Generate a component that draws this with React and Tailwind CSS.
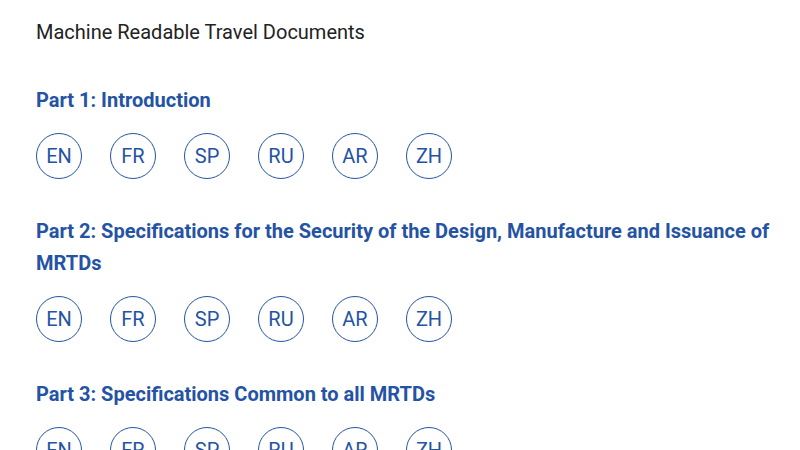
const LANGS = ['EN', 'FR', 'SP', 'RU', 'AR', 'ZH']

const PARTS = [
  'Part 1: Introduction',
  'Part 2: Specifications for the Security of the Design, Manufacture and Issuance of MRTDs',
  'Part 3: Specifications Common to all MRTDs',
]

function LangRow() {
  return (
    <div className="flex gap-[28px]">
      {LANGS.map((l) => (
        <a
          key={l}
          href="#"
          className="flex h-[46px] w-[46px] items-center justify-center rounded-full border-[1.5px] border-[#2553a3] text-[20px] text-[#2553a3] font-['Roboto',sans-serif]"
        >
          {l}
        </a>
      ))}
    </div>
  )
}

export default function App() {
  return (
    <div className="h-[450px] w-[800px] overflow-hidden bg-white pl-[36px] pt-[16px] font-['Roboto',sans-serif]">
      <p className="text-[20px] leading-[32px] text-[#222]">Machine Readable Travel Documents</p>
      {PARTS.map((p) => (
        <section key={p} className="mt-[36px]">
          <h2 className="mb-[17px] max-w-[760px] text-[20px] font-bold leading-[32px] text-[#2553a3]">
            {p}
          </h2>
          <LangRow />
        </section>
      ))}
    </div>
  )
}
